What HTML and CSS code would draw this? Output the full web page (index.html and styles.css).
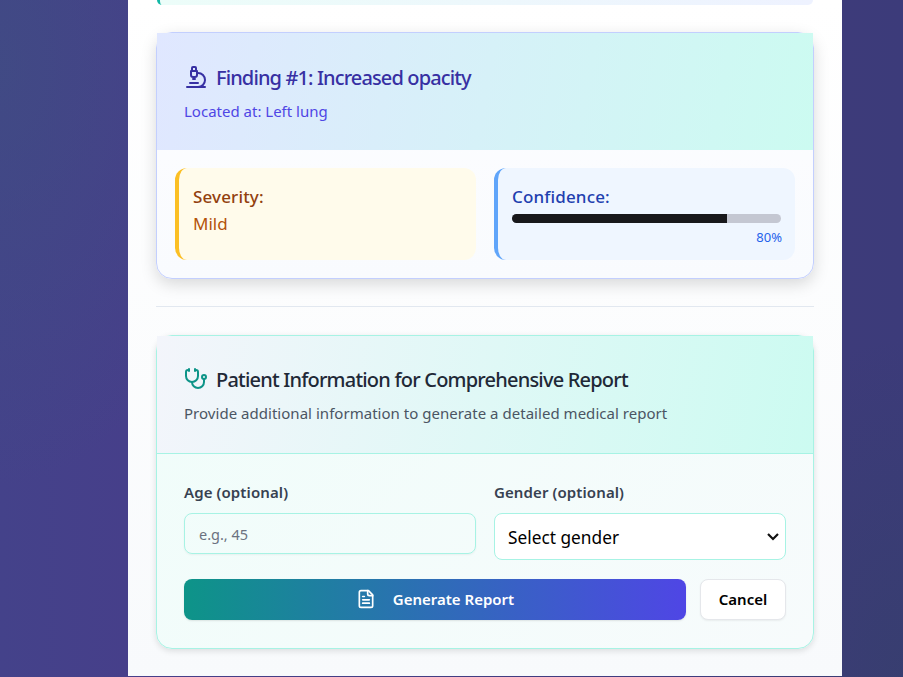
FILE: index.html
```html
<!DOCTYPE html>
<html lang="en">
<head>
<meta charset="utf-8">
<title>Medical Report</title>
<link rel="stylesheet" href="styles.css">
</head>
<body>
<main class="panel">
  <div class="prev-card"></div>

  <section class="card card-finding">
    <header class="card-head head-finding">
      <h2 class="title title-finding">
        <svg class="icon" viewBox="0 0 24 24"><path d="M6 18h8"/><path d="M3 22h18"/><path d="M14 22a7 7 0 1 0 0-14h-1"/><path d="M9 14h2"/><path d="M9 12a2 2 0 0 1-2-2V6h6v4a2 2 0 0 1-2 2Z"/><path d="M12 6V3a1 1 0 0 0-1-1H9a1 1 0 0 0-1 1v3"/></svg>
        <span>Finding #1: Increased opacity</span>
      </h2>
      <p class="sub sub-finding">Located at: Left lung</p>
    </header>
    <div class="stats">
      <div class="stat stat-severity">
        <div class="stat-label">Severity:</div>
        <div class="stat-value">Mild</div>
      </div>
      <div class="stat stat-confidence">
        <div class="stat-label">Confidence:</div>
        <div class="bar"><div class="bar-fill" style="width:80%"></div></div>
        <div class="bar-text">80%</div>
      </div>
    </div>
  </section>

  <hr class="divider">

  <section class="card card-patient">
    <header class="card-head head-patient">
      <h2 class="title title-patient">
        <svg class="icon icon-teal" viewBox="0 0 24 24"><path d="M11 2v2"/><path d="M5 2v2"/><path d="M5 3H4a2 2 0 0 0-2 2v4a6 6 0 0 0 12 0V5a2 2 0 0 0-2-2h-1"/><path d="M8 15a6 6 0 0 0 12 0v-3"/><circle cx="20" cy="10" r="2"/></svg>
        <span>Patient Information for Comprehensive Report</span>
      </h2>
      <p class="sub sub-patient">Provide additional information to generate a detailed medical report</p>
    </header>
    <form class="patient-form">
      <div class="fields">
        <div class="field">
          <label class="label" for="age">Age (optional)</label>
          <input class="input" id="age" type="text" placeholder="e.g., 45">
        </div>
        <div class="field">
          <label class="label" for="gender">Gender (optional)</label>
          <select class="select" id="gender"><option>Select gender</option></select>
        </div>
      </div>
      <div class="actions">
        <button class="btn btn-primary" type="button">
          <svg class="icon-btn" viewBox="0 0 24 24"><path d="M15 2H6a2 2 0 0 0-2 2v16a2 2 0 0 0 2 2h12a2 2 0 0 0 2-2V7Z"/><path d="M14 2v4a2 2 0 0 0 2 2h4"/><path d="M10 9H8"/><path d="M16 13H8"/><path d="M16 17H8"/></svg>
          <span>Generate Report</span>
        </button>
        <button class="btn btn-cancel" type="button">Cancel</button>
      </div>
    </form>
  </section>
</main>
</body>
</html>
```
FILE: styles.css
```css
* { box-sizing: border-box; }
html, body { margin: 0; height: 677px; overflow: hidden; }
body {
  font-family: "Noto Sans", "Open Sans", sans-serif;
  background:
    radial-gradient(ellipse 240px 420px at 0 10%, rgba(60, 85, 125, .42), transparent),
    radial-gradient(ellipse 200px 340px at 100% 100%, rgba(50, 65, 100, .45), transparent),
    linear-gradient(90deg, #44428a 0, #463f8a 128px, #3d3b7a 842px, #3c3b7a 100%);
}
.panel {
  width: 714px;
  height: 676px;
  margin-left: 128px;
  padding: 0 28px;
  background: linear-gradient(180deg, #ffffff 0%, #f8fafc 100%);
}
.prev-card {
  height: 5px;
  margin: 0 1px;
  border-left: 3px solid #14b8a6;
  border-radius: 0 0 12px 12px;
  background: linear-gradient(90deg, #ecfdf9, #eef2ff);
}
.card {
  width: 658px;
  border: 1px solid;
  border-radius: 16px;
  background: linear-gradient(180deg, #fdfdff, #f9fbfe);
}
.card-finding {
  margin-top: 27px;
  border-color: #c3cffe;
  box-shadow: 0 5px 16px rgba(0, 0, 0, .15);
}
.card-patient {
  border-color: #a7f3e4;
  background: linear-gradient(135deg, #f0fdfa, #f7fbfc);
  box-shadow: 0 2px 6px rgba(0, 0, 0, .12);
}
.card-head { height: 117px; padding: 27px 27px 0; }
.head-finding { background: linear-gradient(100deg, #e0e7ff, #ccfbf1); }
.head-patient {
  height: 118px;
  padding-top: 26px;
  background: linear-gradient(100deg, #f3f5fb, #ccfbf1);
  border-bottom: 1px solid #a7f3e4;
}
.title {
  display: flex;
  align-items: center;
  gap: 8px;
  margin: 0;
  height: 34px;
  font-size: 20px;
  font-weight: 500;
}
.title-finding { color: #3730a3; letter-spacing: -.88px; }
.title-patient { color: #1f2937; letter-spacing: -.8px; }
.icon {
  width: 24px;
  height: 24px;
  flex: none;
  fill: none;
  stroke: currentColor;
  stroke-width: 2;
  stroke-linecap: round;
  stroke-linejoin: round;
}
.icon-teal { color: #0d9488; }
.sub { margin: 7px 0 0; font-size: 15px; line-height: 20px; }
.sub-finding { color: #4f46e5; }
.sub-patient { color: #4b5563; letter-spacing: .03px; }
.stats {
  display: grid;
  grid-template-columns: 301px 301px;
  gap: 18px;
  padding: 18px;
}
.stat {
  height: 92px;
  padding: 17px 14px;
  border-left: 4px solid;
  border-radius: 12px;
}
.stat-severity { background: #fffbeb; border-color: #fbbf24; }
.stat-confidence { background: #eff6ff; border-color: #60a5fa; }
.stat-label { font-size: 17px; line-height: 24px; font-weight: 500; letter-spacing: .15px; }
.stat-severity .stat-label { color: #92400e; }
.stat-confidence .stat-label { color: #1e40af; }
.stat-value { margin-top: 3px; font-size: 17px; line-height: 24px; color: #b45309; }
.bar {
  height: 9px;
  margin-top: 5px;
  border-radius: 5px;
  background: #c4c7d2;
  overflow: hidden;
}
.bar-fill { height: 100%; background: #18181b; }
.bar-text {
  margin-top: 6px;
  margin-right: -1px;
  text-align: right;
  font-size: 13px;
  line-height: 16px;
  color: #2563eb;
}
.divider {
  height: 1px;
  margin: 27px 0 28px;
  border: 0;
  background: #e2e8f0;
}
.patient-form { padding: 27px 27px 28px; }
.fields {
  display: grid;
  grid-template-columns: 292px 292px;
  gap: 18px;
  align-items: start;
}
.field { display: flex; flex-direction: column; }
.label {
  margin-bottom: 9px;
  font-size: 15px;
  line-height: 23px;
  font-weight: 600;
  letter-spacing: .1px;
  color: #374151;
}
.input, .select {
  width: 100%;
  border: 1px solid #a7f3e4;
  border-radius: 8px;
  font-family: inherit;
}
.input {
  height: 41px;
  padding: 0 14px;
  font-size: 14.5px;
  background: transparent;
  box-shadow: 0 1px 2px rgba(0, 0, 0, .05);
}
.input::placeholder { color: #6b7280; }
.select {
  height: 47px;
  padding: 2px 13px 0;
  font-size: 17.3px;
  color: #000;
  appearance: none;
  background: #fff url("data:image/svg+xml,%3Csvg xmlns='http://www.w3.org/2000/svg' width='14' height='9' viewBox='0 0 14 9'%3E%3Cpath d='M2 2l5 5 5-5' fill='none' stroke='%23111' stroke-width='2.2'/%3E%3C/svg%3E") no-repeat right 5px center;
}
.actions {
  display: flex;
  gap: 14px;
  margin-top: 19px;
}
.btn {
  height: 41px;
  padding: 0 0 2px;
  border-radius: 8px;
  font-family: inherit;
  font-size: 15px;
  font-weight: 600;
}
.btn-primary {
  display: flex;
  align-items: center;
  justify-content: center;
  gap: 17px;
  flex: 1;
  border: 0;
  color: #fff;
  background: linear-gradient(90deg, #0d9488, #4f46e5);
  box-shadow: 0 1px 2px rgba(0, 0, 0, .1);
}
.icon-btn {
  width: 20px;
  height: 20px;
  fill: none;
  stroke: currentColor;
  stroke-width: 2;
  stroke-linecap: round;
  stroke-linejoin: round;
}
.btn-cancel {
  width: 86px;
  color: #000;
  background: #fff;
  border: 1px solid #e5e7eb;
  box-shadow: 0 1px 2px rgba(0, 0, 0, .06);
}
```
